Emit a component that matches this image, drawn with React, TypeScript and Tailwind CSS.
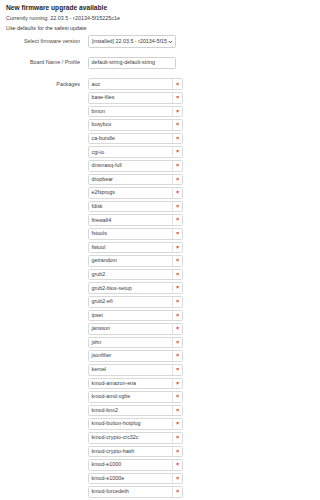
const packages = [
  "auc",
  "base-files",
  "bmon",
  "busybox",
  "ca-bundle",
  "cgi-io",
  "dnsmasq-full",
  "dropbear",
  "e2fsprogs",
  "fdisk",
  "firewall4",
  "fstools",
  "fwtool",
  "getrandom",
  "grub2",
  "grub2-bios-setup",
  "grub2-efi",
  "ipset",
  "jansson",
  "jshn",
  "jsonfilter",
  "kernel",
  "kmod-amazon-ena",
  "kmod-amd-xgbe",
  "kmod-bnx2",
  "kmod-button-hotplug",
  "kmod-crypto-crc32c",
  "kmod-crypto-hash",
  "kmod-e1000",
  "kmod-e1000e",
  "kmod-forcedeth",
];

function Label({ children }: { children: string }) {
  return (
    <div className="w-[74px] shrink-0 text-right text-[5.4px] leading-none whitespace-nowrap text-[#4a4a4a]">
      {children}
    </div>
  );
}

function PackageRow({ name }: { name: string }) {
  return (
    <div className="flex h-[11.6px] w-[95px] rounded-[1.5px] border border-[#d8d8d8] bg-white">
      <div className="flex flex-1 items-center overflow-hidden px-[2.5px] text-[5.35px] leading-none whitespace-nowrap text-[#3a3a3a]">
        {name}
      </div>
      <div className="flex w-[10px] items-center justify-center border-l border-[#e2e2e2] text-[5.5px] leading-none font-bold text-[#c0392b]">
        ×
      </div>
    </div>
  );
}

export default function App() {
  return (
    <div className="h-[500px] w-[247px] overflow-hidden bg-white px-[6px] pt-[3px] font-['Liberation_Sans',Arial,sans-serif]">
      <h2 className="h-[9px] text-[6.65px] leading-[9px] font-bold whitespace-nowrap text-[#1e1e1e]">
        New firmware upgrade available
      </h2>
      <p className="mt-[0.7px] h-[10px] text-[5.4px] leading-[10px] whitespace-nowrap text-[#3a3a3a]">
        Currently running: 22.03.5 - r20134-5f15225c1e
      </p>
      <p className="mt-[0.3px] h-[10px] text-[5.4px] leading-[10px] whitespace-nowrap text-[#3a3a3a]">
        Use defaults for the safest update
      </p>

      <div className="mt-[2.5px] flex items-center gap-[8px]">
        <Label>Select firmware version</Label>
        <div className="flex h-[13px] w-[88px] items-center justify-between rounded-[1.5px] border border-[#d0d0d0] bg-white pr-[2px] pl-[2.5px]">
          <span className="overflow-hidden text-[5.35px] leading-none whitespace-nowrap text-[#3a3a3a]">
            [installed] 22.03.5 - r20134-5f15
          </span>
          <svg width="5" height="4" viewBox="0 0 10 8" className="ml-[1px] shrink-0">
            <path d="M1.5 2 L5 5.5 L8.5 2" fill="none" stroke="#333" strokeWidth="1.8" />
          </svg>
        </div>
      </div>

      <div className="mt-[8.8px] flex items-center gap-[8px]">
        <Label>Board Name / Profile</Label>
        <div className="flex h-[11.7px] w-[88px] items-center overflow-hidden rounded-[1.5px] border border-[#d0d0d0] bg-white px-[2.5px] text-[5.35px] leading-none whitespace-nowrap text-[#3a3a3a]">
          default-string-default-string
        </div>
      </div>

      <div className="mt-[9.5px] flex items-start gap-[8px]">
        <div className="flex h-[11.6px] items-center">
          <Label>Packages</Label>
        </div>
        <div className="flex flex-col gap-[2px]">
          {packages.map((p) => (
            <PackageRow key={p} name={p} />
          ))}
        </div>
      </div>
    </div>
  );
}
